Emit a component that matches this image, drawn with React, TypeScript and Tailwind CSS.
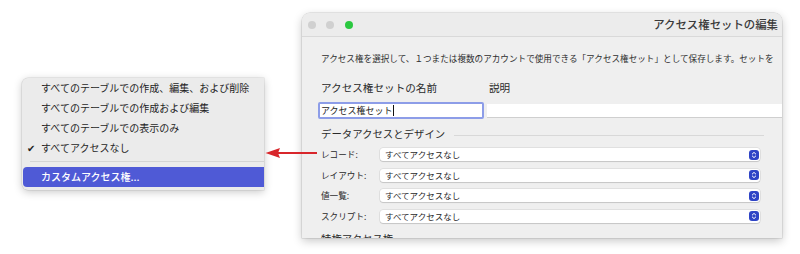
import React from "react";

const FONT = { fontFamily: '"Noto Sans CJK JP", "Noto Sans", sans-serif' };

function SelectRow({ label }: { label: string }) {
  return (
    <div className="flex items-center h-[13px] pr-[22px]">
      <div className="w-[59px] shrink-0 text-[8.6px] leading-[13px] text-[#2a2a2a]">{label}</div>
      <div className="flex-1 h-[13px] bg-white rounded-[3px] shadow-[0_0_0_0.5px_rgba(0,0,0,0.12),0_1px_1px_rgba(0,0,0,0.12)] flex items-center pl-[5px] pr-[1px]">
        <span className="flex-1 text-[8.5px] leading-[13px] text-[#2a2a2a]">すべてアクセスなし</span>
        <div className="w-[10px] h-[10px] rounded-[3px] bg-[#2e44c6] flex items-center justify-center">
          <svg width="6" height="8" viewBox="0 0 6 8" fill="none">
            <path d="M1.3 3 L3 1.4 L4.7 3" stroke="white" strokeWidth="1" strokeLinecap="round" strokeLinejoin="round" />
            <path d="M1.3 5 L3 6.6 L4.7 5" stroke="white" strokeWidth="1" strokeLinecap="round" strokeLinejoin="round" />
          </svg>
        </div>
      </div>
    </div>
  );
}

function MenuItem({ text, checked }: { text: string; checked?: boolean }) {
  return (
    <div className="flex items-center h-[20px]">
      <div className="w-[19px] shrink-0 pl-[5px] text-[10px] leading-[20px] text-[#222]">{checked ? "✔" : ""}</div>
      <span className="text-[10px] leading-[20px] text-[#1f1f1f] whitespace-nowrap">{text}</span>
    </div>
  );
}

export default function App() {
  return (
    <div className="relative w-[800px] h-[254px] bg-white flex overflow-hidden" style={FONT}>
      {/* popup menu */}
      <div className="ml-[22px] mt-[78px] w-[242px] h-[112px] bg-[#ebebeb] rounded-l-[6px] shadow-[0_2px_8px_rgba(0,0,0,0.22),0_0_0_0.5px_rgba(0,0,0,0.12)] flex flex-col">
        <MenuItem text="すべてのテーブルでの作成、編集、および削除" />
        <MenuItem text="すべてのテーブルでの作成および編集" />
        <MenuItem text="すべてのテーブルでの表示のみ" />
        <MenuItem text="すべてアクセスなし" checked />
        <div className="mt-[3px] ml-[8px] h-px bg-[#d4d4d4]" />
        <div className="mt-[5px] ml-[1px] h-[20px] bg-[#4f5ad6] rounded-l-[4px] flex items-center pl-[18px]">
          <span className="text-[10px] leading-[20px] text-white font-medium whitespace-nowrap">カスタムアクセス権...</span>
        </div>
      </div>

      {/* window */}
      <div className="ml-[38px] mt-[13px] w-[480px] h-[225px] bg-[#efefef] rounded-t-[8px] shadow-[0_3px_10px_rgba(0,0,0,0.22),0_0_0_0.5px_rgba(0,0,0,0.15)] overflow-hidden flex flex-col">
        {/* title bar */}
        <div className="h-[24px] shrink-0 bg-[#ececec] border-b border-[#d9d9d9] flex items-center pl-[6px]">
          <div className="w-[8px] h-[8px] rounded-full bg-[#d0d0d0]" />
          <div className="ml-[10px] w-[8px] h-[8px] rounded-full bg-[#d0d0d0]" />
          <div className="ml-[11px] w-[8px] h-[8px] rounded-full bg-[#2bc840]" />
          <div className="ml-auto pr-[4px] text-[11.4px] font-medium text-[#3a3a3a] whitespace-nowrap">アクセス権セットの編集</div>
        </div>

        <div className="flex flex-col pl-[19px]">
          <div className="mt-[15px] h-[12px] text-[8.6px] leading-[12px] text-[#2e2e2e] whitespace-nowrap">
            アクセス権を選択して、１つまたは複数のアカウントで使用できる「アクセス権セット」として保存します。セットを
          </div>

          <div className="mt-[17px] h-[14px] flex text-[10.6px] leading-[14px] text-[#2a2a2a]">
            <span className="w-[168px] whitespace-nowrap">アクセス権セットの名前</span>
            <span>説明</span>
          </div>

          <div className="mt-[7px] -ml-[3px] h-[17px] flex items-center">
            <div className="w-[166px] h-[17px] bg-white border-[2px] border-[#8d9de8] rounded-[2px] flex items-center pl-[1px]">
              <span className="text-[9px] leading-[13px] text-[#222] whitespace-nowrap">アクセス権セット</span>
              <div className="w-px h-[11px] bg-[#111]" />
            </div>
            <div className="ml-[3px] flex-1 h-[14px] bg-white border-b border-[#cfcfcf]" />
          </div>

          <div className="mt-[8px] h-[14px] flex items-center pr-[18px]">
            <span className="text-[10.4px] leading-[14px] text-[#2a2a2a] whitespace-nowrap">データアクセスとデザイン</span>
            <div className="ml-[9px] flex-1 h-px bg-[#d8d8d8] mt-[3px]" />
          </div>

          <div className="mt-[7px] flex flex-col gap-[7.5px]">
            <SelectRow label="レコード:" />
            <SelectRow label="レイアウト:" />
            <SelectRow label="値一覧:" />
            <SelectRow label="スクリプト:" />
          </div>

          <div className="mt-[9px] h-[14px] text-[10.4px] leading-[14px] text-[#2a2a2a] whitespace-nowrap">特権アクセス権</div>
        </div>
      </div>

      {/* red arrow */}
      <svg className="absolute left-[265px] top-[147px]" width="54" height="12" viewBox="0 0 54 12">
        <path d="M12 6 L52 6" stroke="#d8262b" strokeWidth="2.2" />
        <path d="M0.5 6 L15 1 L13 6 L15 11 Z" fill="#d8262b" />
      </svg>
    </div>
  );
}
